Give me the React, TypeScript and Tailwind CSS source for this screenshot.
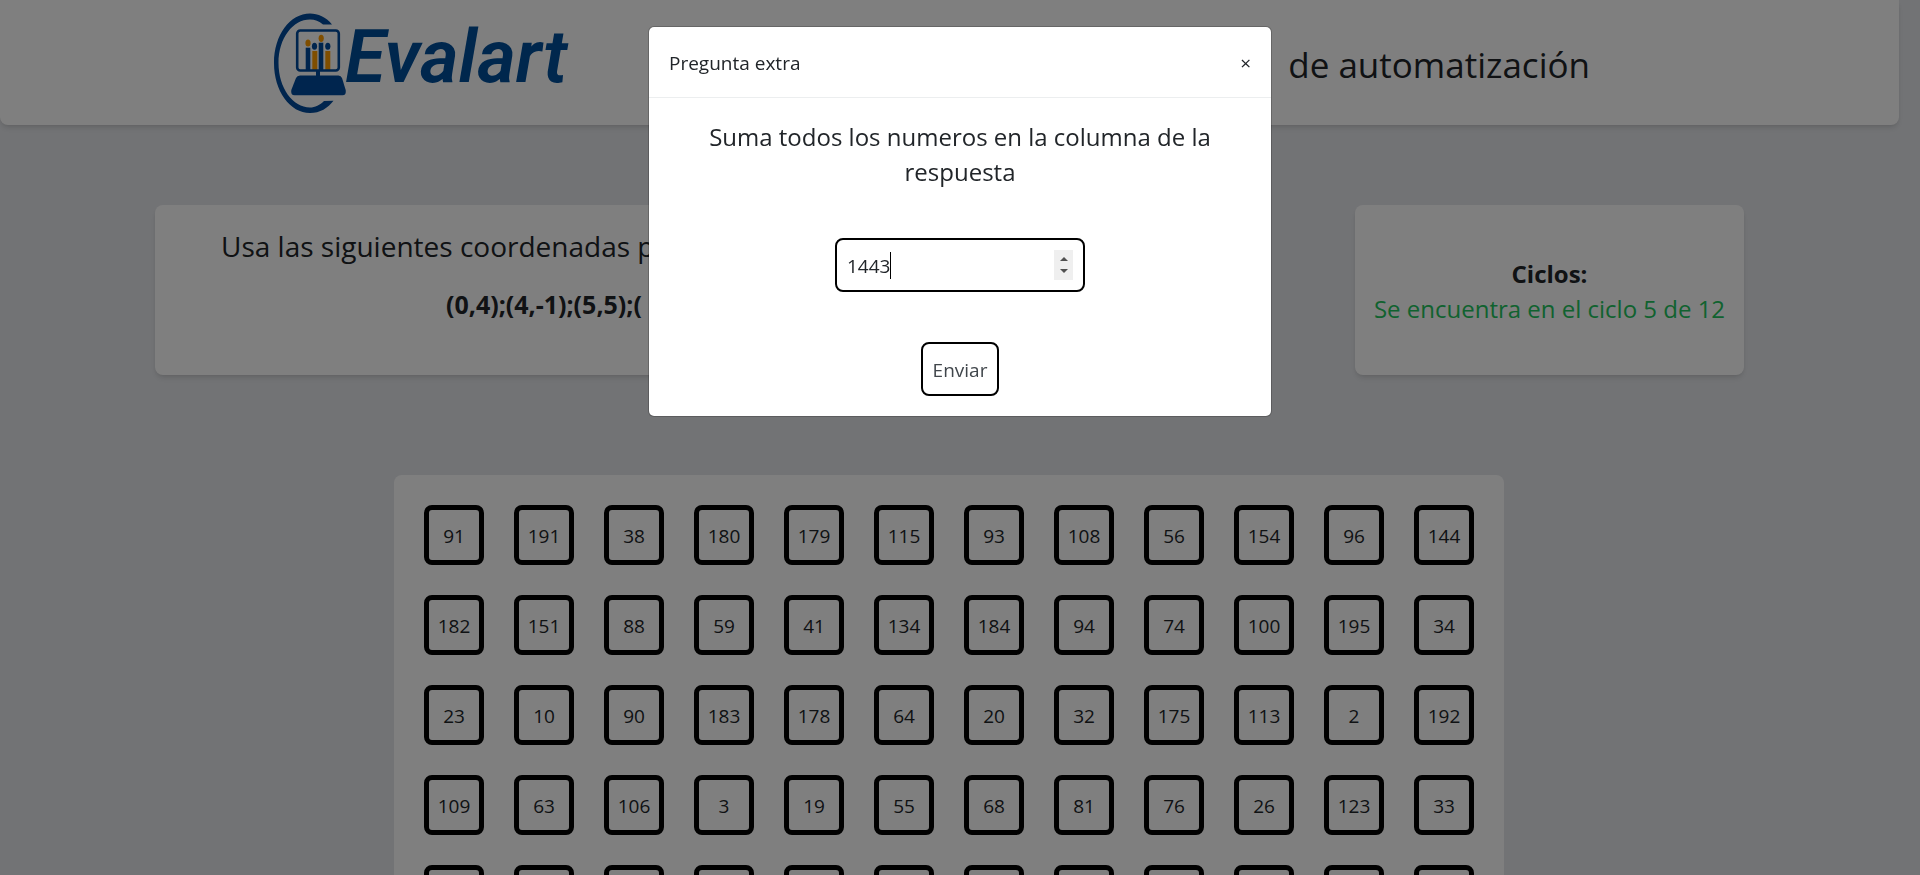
const rows: (number | null)[][] = [
  [91, 191, 38, 180, 179, 115, 93, 108, 56, 154, 96, 144],
  [182, 151, 88, 59, 41, 134, 184, 94, 74, 100, 195, 34],
  [23, 10, 90, 183, 178, 64, 20, 32, 175, 113, 2, 192],
  [109, 63, 106, 3, 19, 55, 68, 81, 76, 26, 123, 33],
  Array(12).fill(null),
];

function Logo() {
  return (
    <svg viewBox="0 0 304 105" className="h-[105px] w-[304px] shrink-0" role="img" aria-label="Evalart">
      <g fill="#004a9c">
        <path d="M58 14.500C52 7 44 3.500 36 3.500C16 3.500 0 25 0 53C0 81 16 103 36 103C46 103 54 98 59.500 90.700L50 91C46 95 41 97.500 36 97.500C19 97.500 4.500 78 4.500 53C4.500 28 19 9.500 36 9.500C41 9.500 45 11 49 14.500Z" />
        <rect x="31.700" y="37.700" width="4.600" height="23" />
        <rect x="44.700" y="32.700" width="4.600" height="28" />
        <ellipse cx="40.500" cy="36.300" rx="2.600" ry="3.500" />
        <ellipse cx="53.800" cy="36.300" rx="2.600" ry="3.500" />
        <rect x="42" y="61" width="4" height="6" />
        <path d="M26 65.500H64.500Q67 65.500 68 68L71.700 80Q72.500 85.300 68.500 85.300H20.500Q16.500 85.300 17.300 80L22 68Q23 65.500 26 65.500Z" />
      </g>
      <g fill="#ff9d00">
        <rect x="38.300" y="41" width="5" height="19" />
        <rect x="51.300" y="41" width="5" height="19" />
        <ellipse cx="34" cy="33" rx="2.600" ry="3.600" />
        <ellipse cx="47.200" cy="28.300" rx="2.600" ry="3.600" />
      </g>
      <rect x="23.200" y="20.500" width="41.600" height="40" rx="3" fill="none" stroke="#004a9c" strokeWidth="2.600" />
      <text x="71" y="72" fill="#004f9b" className="font-['Roboto',sans-serif] text-[74px] font-semibold italic">
        Evalart
      </text>
    </svg>
  );
}

function Header() {
  return (
    <header className="flex h-[125px] items-center justify-between rounded-b-lg bg-white pr-[309px] pl-[274px] shadow-md">
      <Logo />
      <h1 className="pt-1 text-[35px] leading-10">de automatización</h1>
    </header>
  );
}

function Board() {
  return (
    <section className="mx-auto mt-[100px] grid w-fit grid-cols-12 gap-[30px] rounded-lg bg-white p-[30px]">
      {rows.flat().map((value, i) => (
        <div key={i} className="flex size-[60px] items-center justify-center rounded-lg border-5 border-black pt-[2px] text-[19px]">
          {value}
        </div>
      ))}
    </section>
  );
}

function Modal() {
  return (
    <div className="fixed inset-0 z-10 flex items-start justify-center bg-black/50 pt-[26px]">
      <div role="dialog" aria-modal="true" aria-labelledby="titulo" className="w-[624px] rounded-md border border-black/20 bg-white bg-clip-padding text-[#212529]">
        <div className="flex h-[71px] items-center justify-between border-b border-[#eceeef] px-5 pt-[2px]">
          <h2 id="titulo" className="text-[19px]">Pregunta extra</h2>
          <button type="button" aria-label="Cerrar" className="text-[19px]">×</button>
        </div>
        <form className="flex flex-col items-center px-5 pt-[21px] pb-5" onSubmit={(e) => e.preventDefault()}>
          <label htmlFor="respuesta" className="px-5 text-center text-2xl leading-[35px]">
            Suma todos los numeros en la columna de la respuesta
          </label>
          <div className="mt-[49px] flex h-[54px] w-[250px] items-center rounded-lg border-2 border-black px-[10px]">
            <input
              id="respuesta"
              type="number"
              defaultValue={1443}
              className="[field-sizing:content] appearance-none pt-[2px] text-[19px] outline-none [-moz-appearance:textfield] [&::-webkit-inner-spin-button]:appearance-none"
            />
            <span className="h-[27px] w-px bg-black" />
            <span className="ml-auto flex h-[30px] w-[19px] flex-col items-center justify-center gap-2 bg-[#efefef]">
              <svg viewBox="0 0 8 4" className="h-1 w-2"><path d="M0 4L4 0L8 4Z" fill="#505050" /></svg>
              <svg viewBox="0 0 8 4" className="h-1 w-2"><path d="M0 0L4 4L8 0Z" fill="#505050" /></svg>
            </span>
          </div>
          <button type="submit" className="mt-[50px] h-[54px] rounded-lg border-2 border-black px-[10px] pt-[2px] text-[19px] text-[#40464b]">
            Enviar
          </button>
        </form>
      </div>
    </div>
  );
}

export default function App() {
  return (
    <div className="h-screen overflow-hidden bg-gray-200 pr-[21px] font-['Open_Sans','Noto_Sans',sans-serif] text-[#212529]">
      <Header />
      <main className="pr-px">
        <div className="mt-20 flex gap-[100px] pr-[154px] pl-[155px]">
          <section className="h-[170px] flex-1 rounded-lg bg-white px-[66px] pt-[19px] whitespace-nowrap shadow-md">
            <h2 className="text-[28px] leading-[44px]">Usa las siguientes coordenadas p</h2>
            <p className="mt-[18px] pl-[225px] text-[25px] leading-[36px] font-bold">(0,4);(4,-1);(5,5);(</p>
          </section>
          <section className="flex h-[170px] w-[389px] shrink-0 flex-col items-center justify-center rounded-lg bg-white pt-[2px] text-2xl leading-[35px] whitespace-nowrap shadow-md">
            <h2 className="font-bold">Ciclos:</h2>
            <p className="text-[#22c55e]">Se encuentra en el ciclo 5 de 12</p>
          </section>
        </div>
        <Board />
      </main>
      <Modal />
    </div>
  );
}
